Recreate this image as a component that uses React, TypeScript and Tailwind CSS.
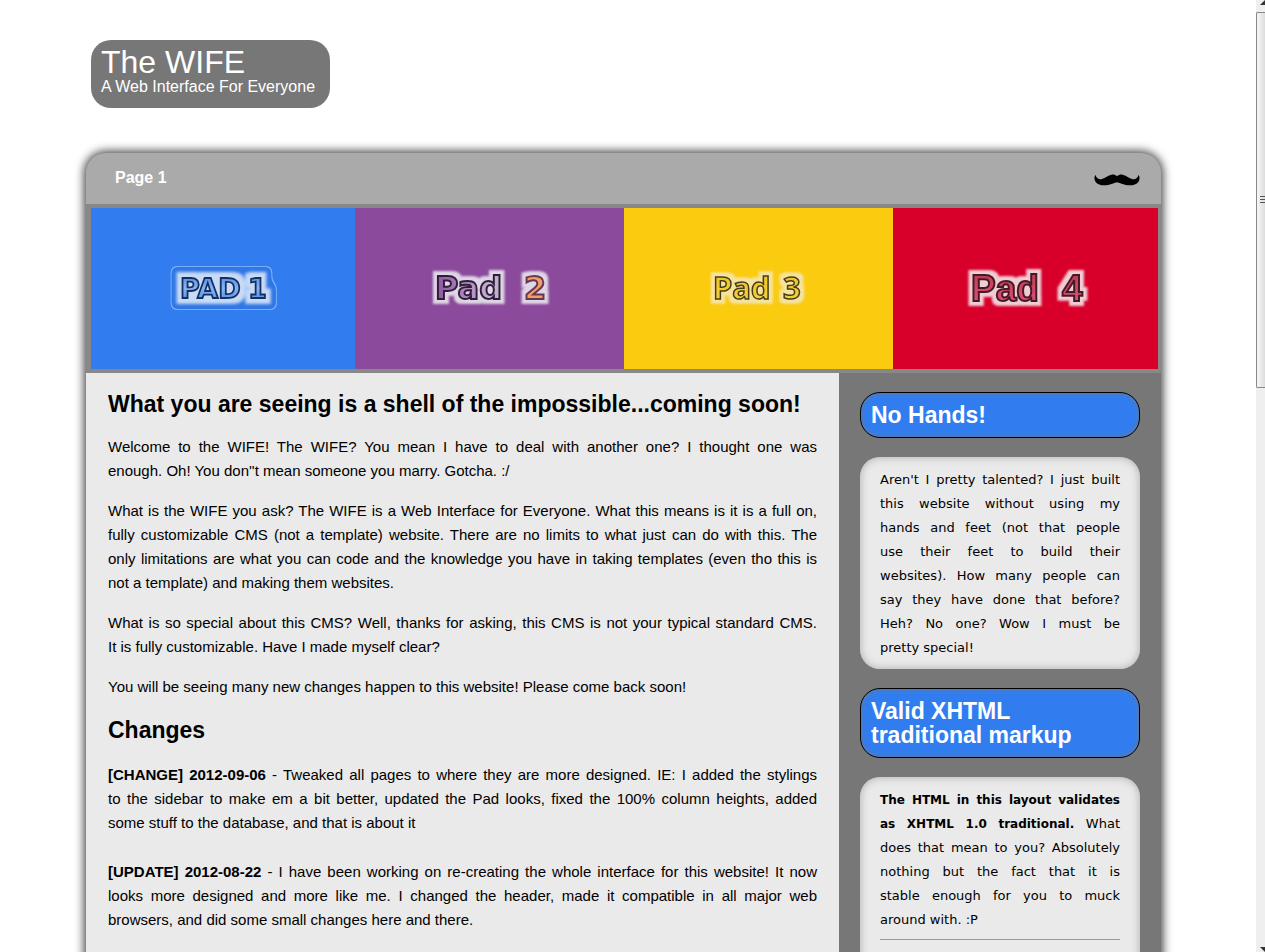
import React from "react";

type PadProps = {
  label: string;
  bg: string;
  grow: string;
  children: React.ReactNode;
};

function Pad({ label, bg, grow, children }: PadProps) {
  return (
    <a
      href="#pad"
      aria-label={label}
      className={`flex h-[161px] min-w-0 items-center justify-center ${grow} ${bg}`}
    >
      {children}
    </a>
  );
}

type HaloProps = { id: string; color: string };

function Halo({ id, color }: HaloProps) {
  return (
    <filter id={id} x="-20%" y="-60%" width="140%" height="220%" colorInterpolationFilters="sRGB">
      <feMorphology in="SourceAlpha" operator="dilate" radius="4" result="wide" />
      <feGaussianBlur in="wide" stdDeviation="1.3" result="soft" />
      <feFlood floodColor={color} />
      <feComposite in2="soft" operator="in" result="glow" />
      <feMerge>
        <feMergeNode in="glow" />
        <feMergeNode in="SourceGraphic" />
      </feMerge>
    </filter>
  );
}

function PadOneLogo() {
  return (
    <svg width="130" height="60" viewBox="0 0 130 60" className="font-['DejaVu_Sans']">
      <defs>
        <linearGradient id="blue" x1="0" y1="0" x2="0" y2="1">
          <stop offset="0" stopColor="#4a88ea" />
          <stop offset=".5" stopColor="#87b4f4" />
          <stop offset="1" stopColor="#4384e8" />
        </linearGradient>
        <filter
          id="rings"
          filterUnits="userSpaceOnUse"
          x="0"
          y="0"
          width="130"
          height="60"
          colorInterpolationFilters="sRGB"
        >
          <feMorphology in="SourceAlpha" operator="dilate" radius="11" result="far" />
          <feGaussianBlur in="far" stdDeviation="3" result="b" />
          <feComponentTransfer in="b" result="outer">
            <feFuncA type="linear" slope="10" intercept="-4.5" />
          </feComponentTransfer>
          <feMorphology in="outer" operator="erode" radius="1" result="inner" />
          <feFlood floodColor="#78aef8" />
          <feComposite in2="outer" operator="in" result="ring" />
          <feFlood floodColor="#2f76e6" />
          <feComposite in2="inner" operator="in" result="gap" />
          <feMorphology in="SourceAlpha" operator="dilate" radius="5" result="d" />
          <feGaussianBlur in="d" stdDeviation="1.5" result="s" />
          <feFlood floodColor="#c7daf6" />
          <feComposite in2="s" operator="in" result="glow" />
          <feMerge>
            <feMergeNode in="ring" />
            <feMergeNode in="gap" />
            <feMergeNode in="glow" />
            <feMergeNode in="SourceGraphic" />
          </feMerge>
        </filter>
      </defs>
      <text y="39" fontSize="27" fontWeight="700" fill="url(#blue)" stroke="#16305e" strokeWidth="1.8" filter="url(#rings)">
        <tspan x="22">PAD</tspan>
        <tspan x="90">1</tspan>
      </text>
    </svg>
  );
}

function PadTwoLogo() {
  return (
    <svg width="140" height="60" viewBox="0 0 140 60" className="font-['DejaVu_Sans']">
      <defs>
        <Halo id="halo2" color="#ded5e5" />
        <linearGradient id="violet" x1="0" y1="0" x2="1" y2="0">
          <stop offset="0" stopColor="#8f55a0" />
          <stop offset=".5" stopColor="#c7b3d2" />
          <stop offset="1" stopColor="#7fa58c" />
        </linearGradient>
      </defs>
      <text y="40" fontSize="32" fontWeight="700" fill="url(#violet)" stroke="#301c3c" strokeWidth="2" filter="url(#halo2)">
        <tspan x="15">Pad</tspan>
        <tspan x="104" fill="#eba066" stroke="#6b3550">2</tspan>
      </text>
    </svg>
  );
}

function PadThreeLogo() {
  return (
    <svg width="120" height="60" viewBox="0 0 120 60" className="font-['Noto_Sans']">
      <defs>
        <Halo id="halo3" color="#f5e3a0" />
        <linearGradient id="gold" x1="0" y1="0" x2="0" y2="1">
          <stop offset="0" stopColor="#eebf18" />
          <stop offset="1" stopColor="#f8d344" />
        </linearGradient>
      </defs>
      <text y="40" fontSize="31" fontWeight="700" fill="url(#gold)" stroke="#463d16" strokeWidth="1.5" filter="url(#halo3)">
        <tspan x="14">Pad</tspan>
        <tspan x="84">3</tspan>
      </text>
    </svg>
  );
}

function PadFourLogo() {
  return (
    <svg width="150" height="60" viewBox="0 0 150 60" className="font-['Liberation_Sans']">
      <defs>
        <Halo id="halo4" color="#f0ccd3" />
        <linearGradient id="rose" x1="0" y1="0" x2="0" y2="1">
          <stop offset="0" stopColor="#bd3650" />
          <stop offset="1" stopColor="#e6557b" />
        </linearGradient>
      </defs>
      <text y="42" fontSize="37" fontWeight="700" fill="url(#rose)" stroke="#441b25" strokeWidth="2" filter="url(#halo4)">
        <tspan x="20">Pad</tspan>
        <tspan x="111">4</tspan>
      </text>
    </svg>
  );
}

function Mustache() {
  return (
    <svg width="46" height="12" viewBox="0 0 46 12" aria-hidden="true" className="mt-[21px]">
      <path
        d="M23 2.200C21.500.9 19.500.4 17.500.7C14 1.200 11.500 4 8 5C5 5.800 2.300 4.500 1.400.8C.2 2.600.1 5.500 1.500 7.700C4 11.300 9.500 11.800 14 10.900C18 10.100 20.500 8.800 23 8.200C25.500 8.800 28 10.100 32 10.900C36.500 11.800 42 11.300 44.500 7.700C45.900 5.500 45.800 2.600 44.600.8C43.700 4.500 41 5.800 38 5C34.500 4 32 1.200 28.500.7C26.500.4 24.500.9 23 2.200Z"
        fill="#000"
      />
    </svg>
  );
}

/* A run of set lines: every line but the last is spread over the full column. */
function Lines({ lines, className }: { lines: React.ReactNode[]; className?: string }) {
  return (
    <p className={className}>
      {lines.map((line, i) => (
        <span
          key={i}
          className={i < lines.length - 1 ? "block [text-align-last:justify]" : "block text-left"}
        >
          {line}{" "}
        </span>
      ))}
    </p>
  );
}

function SideTitle({ children }: { children: React.ReactNode }) {
  return (
    <h2 className="mb-[19px] rounded-[20px] border border-black bg-[#317df0] p-2.5 text-[23px] leading-6 font-bold text-white shadow-[inset_0_0_5px_#777]">
      {children}
    </h2>
  );
}

function SideBox({ children }: { children: React.ReactNode }) {
  return (
    <div className="mb-[19px] rounded-[20px] bg-[#eaeaea] px-5 pt-[11px] pb-[9px] font-['DejaVu_Sans',sans-serif] text-[13px] leading-6 shadow-[inset_0_0_8px_#aaa]">
      {children}
    </div>
  );
}

function Scrollbar() {
  return (
    <div aria-hidden="true" className="flex w-[9px] shrink-0 flex-col overflow-hidden bg-[#efefef]">
      <svg width="9" height="12" viewBox="0 0 9 12">
        <path d="M4 5L9 0V5Z" fill="#333" />
      </svg>
      <div className="flex h-[376px] flex-col justify-center rounded-l-xs border border-r-0 border-[#888] bg-linear-to-r from-[#f8f8f8] to-[#dcdcdc]">
        <svg width="9" height="10" viewBox="0 0 9 10">
          <path d="M3 1.500H9M3 4.500H9M3 7.500H9" stroke="#555" />
        </svg>
      </div>
      <svg width="9" height="12" viewBox="0 0 9 12" className="mt-auto">
        <path d="M4 7H9V12Z" fill="#333" />
      </svg>
    </div>
  );
}

export default function App() {
  return (
    <div className="flex h-screen overflow-hidden bg-white font-['Liberation_Sans',Arial,sans-serif] text-black">
      <div className="min-w-0 flex-1 overflow-hidden pt-10 pr-[95px] pl-[86px]">
        <header className="ml-[5px] h-[68px] w-[239px] rounded-[20px] bg-[#777] px-2.5 pt-1.5 text-white">
          <h1 className="text-[32px] leading-8">The WIFE</h1>
          <p className="text-[16px] leading-[18px]">A Web Interface For Everyone</p>
        </header>

        <div className="mt-[45px] rounded-t-[20px] bg-[#888] shadow-[0_0_10px_2px_#444]">
          <nav className="flex h-[51px] items-start justify-between rounded-t-[20px] bg-[#aaa] pr-[21px] pl-[29px]">
            <a href="#page" className="mt-[13px] text-[16px] leading-6 font-bold text-white">
              Page 1
            </a>
            <Mustache />
          </nav>

          <div className="flex py-1 pr-[3px] pl-[5px]">
            <Pad label="Pad 1" bg="bg-[#317df0]" grow="flex-[264]">
              <PadOneLogo />
            </Pad>
            <Pad label="Pad 2" bg="bg-[#8b4a9b]" grow="flex-[269]">
              <PadTwoLogo />
            </Pad>
            <Pad label="Pad 3" bg="bg-[#fbcb10]" grow="flex-[269]">
              <PadThreeLogo />
            </Pad>
            <Pad label="Pad 4" bg="bg-[#d8002b]" grow="flex-[265]">
              <PadFourLogo />
            </Pad>
          </div>

          <div className="flex bg-[#777]">
            <main className="min-w-0 flex-1 bg-[#eaeaea] px-[22px] pt-4 text-[15px] leading-6">
              <h2 className="mb-4 text-[23px] leading-[30px] font-bold">
                What you are seeing is a shell of the impossible...coming soon!
              </h2>
              <Lines
                className="mb-4"
                lines={[
                  "Welcome to the WIFE! The WIFE? You mean I have to deal with another one? I thought one was",
                  "enough. Oh! You don''t mean someone you marry. Gotcha. :/",
                ]}
              />
              <Lines
                className="mb-4"
                lines={[
                  "What is the WIFE you ask? The WIFE is a Web Interface for Everyone. What this means is it is a full on,",
                  "fully customizable CMS (not a template) website. There are no limits to what just can do with this. The",
                  "only limitations are what you can code and the knowledge you have in taking templates (even tho this is",
                  "not a template) and making them websites.",
                ]}
              />
              <Lines
                className="mb-4"
                lines={[
                  "What is so special about this CMS? Well, thanks for asking, this CMS is not your typical standard CMS.",
                  "It is fully customizable. Have I made myself clear?",
                ]}
              />
              <p className="mb-4">
                You will be seeing many new changes happen to this website! Please come back soon!
              </p>
              <h2 className="mb-[18px] text-[23px] leading-[30px] font-bold">Changes</h2>
              <Lines
                className="mb-[25px]"
                lines={[
                  <>
                    <b>[CHANGE] 2012-09-06</b> - Tweaked all pages to where they are more designed. IE: I added the
                    stylings
                  </>,
                  "to the sidebar to make em a bit better, updated the Pad looks, fixed the 100% column heights, added",
                  "some stuff to the database, and that is about it",
                ]}
              />
              <Lines
                className="mb-[25px]"
                lines={[
                  <>
                    <b>[UPDATE] 2012-08-22</b> - I have been working on re-creating the whole interface for this
                    website! It now
                  </>,
                  "looks more designed and more like me. I changed the header, made it compatible in all major web",
                  "browsers, and did some small changes here and there.",
                ]}
              />
            </main>

            <aside className="w-[322px] shrink-0 px-[21px] pt-[19px]">
              <SideTitle>No Hands!</SideTitle>
              <SideBox>
                <Lines
                  lines={[
                    "Aren't I pretty talented? I just built",
                    "this website without using my",
                    "hands and feet (not that people",
                    "use their feet to build their",
                    "websites). How many people can",
                    "say they have done that before?",
                    "Heh? No one? Wow I must be",
                    "pretty special!",
                  ]}
                />
              </SideBox>
              <SideTitle>
                Valid XHTML
                <br />
                traditional markup
              </SideTitle>
              <SideBox>
                <Lines
                  lines={[
                    <b className="text-[12px]">The HTML in this layout validates</b>,
                    <>
                      <b className="text-[12px]">as XHTML 1.0 traditional.</b> What
                    </>,
                    "does that mean to you? Absolutely",
                    "nothing but the fact that it is",
                    "stable enough for you to muck",
                    "around with. :P",
                  ]}
                />
                <hr className="my-[7px] border-[#999]" />
                <div className="h-6" />
              </SideBox>
            </aside>
          </div>
        </div>
      </div>
      <Scrollbar />
    </div>
  );
}
